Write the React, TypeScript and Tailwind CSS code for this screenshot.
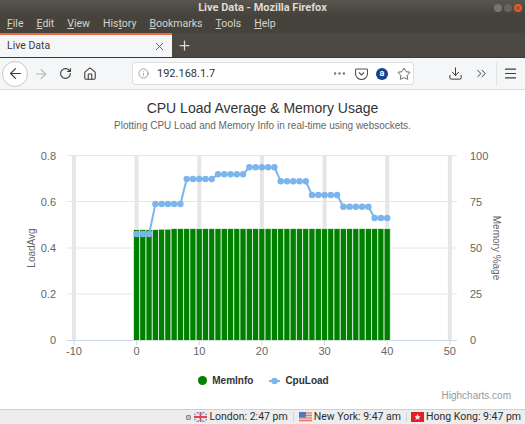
import { ArrowLeft, ArrowRight, RotateCw, House, Info, Ellipsis, Star, Download, ChevronsRight, Menu, X, Plus } from 'lucide-react';

const menus = [
  ['F', 'ile'],
  ['E', 'dit'],
  ['V', 'iew'],
  ['His', 't', 'ory'],
  ['B', 'ookmarks'],
  ['T', 'ools'],
  ['H', 'elp'],
];

const xAt = (v: number) => 136.6 + v * 6.265;
const yTicks = [
  { y: 155.5, left: '0.8', right: '100' },
  { y: 201.5, left: '0.6', right: '75' },
  { y: 248, left: '0.4', right: '50' },
  { y: 294, left: '0.2', right: '25' },
  { y: 340, left: '0', right: '0' },
];
const xTicks = [-10, 0, 10, 20, 30, 40, 50];

const cpuRuns = [
  { n: 3, y: 234 },
  { n: 5, y: 204 },
  { n: 5, y: 179 },
  { n: 5, y: 174.3 },
  { n: 5, y: 167.3 },
  { n: 5, y: 181.3 },
  { n: 5, y: 195 },
  { n: 5, y: 206.7 },
  { n: 3, y: 218 },
];
const cpu = cpuRuns.flatMap((r) => Array.from({ length: r.n }, () => r.y));

function TitleBar() {
  return (
    <div className="relative flex h-[15px] shrink-0 items-center justify-center bg-gradient-to-b from-[#57554e] to-[#45433c]">
      <span className="text-[11px] font-bold leading-none text-[#dfdbd2]">Live Data - Mozilla Firefox</span>
      <div className="absolute right-[3px] top-[4px] flex gap-[2px]">
        <span className="h-[8px] w-[8px] rounded-full bg-[#77756e]" />
        <span className="h-[8px] w-[8px] rounded-full bg-[#66645d]" />
        <span className="flex h-[8px] w-[8px] items-center justify-center rounded-full bg-[#e8592b]">
          <X size={6} strokeWidth={3} className="text-[#41403a]" />
        </span>
      </div>
    </div>
  );
}

function MenuBar() {
  return (
    <div className="flex h-[18px] shrink-0 items-center gap-[13px] bg-[#45433c] pl-[7px] text-[10.5px] leading-none text-[#d6d3ca]">
      {menus.map((m) => (
        <span key={m.join('')}>
          {m.length === 2 ? (
            <>
              <span className="underline">{m[0]}</span>
              {m[1]}
            </>
          ) : (
            <>
              {m[0]}
              <span className="underline">{m[1]}</span>
              {m[2]}
            </>
          )}
        </span>
      ))}
    </div>
  );
}

function TabBar() {
  return (
    <div className="flex h-[25px] shrink-0 items-stretch border-b border-[#3a3933] bg-[#4b4942]">
      <div className="flex w-[172px] items-center justify-between border-t-2 border-[#e9693f] bg-[#f5f6f7] pl-[7px] pr-[6px] text-[10.5px] text-[#3c3b37]">
        <span>Live Data</span>
        <X size={13} strokeWidth={1.5} className="text-[#444]" />
      </div>
      <div className="flex w-[24px] items-center justify-center">
        <Plus size={15} strokeWidth={2} className="text-[#dcdad4]" />
      </div>
    </div>
  );
}

function PocketIcon() {
  return (
    <svg width="13" height="12" viewBox="0 0 13 12" fill="none" stroke="#55554f" strokeWidth="1.1">
      <path d="M1.5 1h10a1 1 0 0 1 1 1v3.5a5.8 5.8 0 0 1-12 0V2a1 1 0 0 1 1-1z" />
      <path d="M4 4.5l2.5 2.4L9 4.5" strokeWidth="1.3" />
    </svg>
  );
}

function NavBar() {
  return (
    <div className="flex h-[32px] shrink-0 items-center border-b border-[#dcdcdc] bg-[#f5f6f7] text-[#3c3c3c]">
      <div className="ml-[2px] flex h-[26px] w-[26px] items-center justify-center rounded-full border border-[#c9c9c9] bg-white">
        <ArrowLeft size={17} strokeWidth={1.6} />
      </div>
      <ArrowRight size={16} strokeWidth={1.6} className="ml-[5px] text-[#b5b5b5]" />
      <RotateCw size={13} strokeWidth={2} className="ml-[10px]" />
      <House size={14} strokeWidth={1.8} className="ml-[11px]" />
      <div className="ml-[35px] flex h-[23px] w-[282px] items-center rounded-[3px] border border-[#dedede] bg-white pl-[5px] pr-[2px]">
        <Info size={11} strokeWidth={1.5} className="text-[#7a7a7a]" />
        <span className="ml-[8px] flex-1 text-[11px] leading-none text-[#333]">192.168.1.7</span>
        <Ellipsis size={15} className="text-[#777]" />
        <span className="ml-[8px] flex">
          <PocketIcon />
        </span>
        <span className="ml-[8px] flex h-[12px] w-[12px] items-center justify-center rounded-full bg-[#16418c] text-[9px] font-bold leading-none text-white">
          a
        </span>
        <Star size={14} strokeWidth={1.4} className="ml-[9px] text-[#444]" />
      </div>
      <Download size={15} strokeWidth={1.6} className="ml-[34px]" />
      <ChevronsRight size={15} strokeWidth={1.6} className="ml-[11px]" />
      <div className="ml-[7px] h-[24px] w-px bg-[#e2e2e2]" />
      <Menu size={15} strokeWidth={1.8} className="ml-[6px]" />
    </div>
  );
}

function Chart() {
  const font = '"Liberation Sans", Arial, sans-serif';
  return (
    <svg width="525" height="230" viewBox="0 135 525 230" fontFamily={font} className="block shrink-0">
      {yTicks.slice(0, 4).map((t) => (
        <line key={t.y} x1="67" x2="457" y1={t.y} y2={t.y} stroke="#e6e6e6" strokeWidth="1" />
      ))}
      {xTicks.map((v) => (
        <rect key={v} x={xAt(v) - 2} y="155" width="4" height="185" fill="#e6e6e6" />
      ))}
      <line x1="67" x2="457" y1="340.5" y2="340.5" stroke="#ccd6eb" strokeWidth="1" />
      {xTicks.map((v) => (
        <line key={v} x1={xAt(v)} x2={xAt(v)} y1="340" y2="345" stroke="#ccd6eb" strokeWidth="1" />
      ))}
      {Array.from({ length: 41 }, (_, i) => {
        const top = i < 4 ? 229.6 : i < 6 ? 229.2 : 228.6;
        return <rect key={i} x={xAt(i) - 3.1} y={top} width="6.2" height={340.5 - top} fill="#008000" stroke="#ffffff" strokeWidth="0.9" strokeOpacity="0.75" />;
      })}
      <polyline points={cpu.map((y, i) => `${xAt(i)},${y}`).join(' ')} fill="none" stroke="#7cb5ec" strokeWidth="2" />
      {cpu.map((y, i) => (
        <circle key={i} cx={xAt(i)} cy={y} r="3.2" fill="#7cb5ec" />
      ))}
      {yTicks.map((t) => (
        <text key={t.left} x="56" y={t.y + 4} textAnchor="end" fontSize="11" fill="#666666">
          {t.left}
        </text>
      ))}
      {yTicks.map((t) => (
        <text key={t.right} x="470" y={t.y + 4} fontSize="11" fill="#666666">
          {t.right}
        </text>
      ))}
      {xTicks.map((v) => (
        <text key={v} x={xAt(v)} y="355" textAnchor="middle" fontSize="11" fill="#666666">
          {v}
        </text>
      ))}
      <text transform="translate(35 248) rotate(-90)" textAnchor="middle" fontSize="10" fill="#666666">
        LoadAvg
      </text>
      <text transform="translate(493 248) rotate(90)" textAnchor="middle" fontSize="10" fill="#666666">
        Memory %age
      </text>
    </svg>
  );
}

function Legend() {
  return (
    <div className="mt-[10px] flex shrink-0 items-center justify-center gap-[16px] pl-[2px] text-[10px] font-bold leading-[11px] text-[#333333]">
      <span className="flex items-center gap-[5px]">
        <span className="h-[9px] w-[9px] rounded-full bg-[#008000]" />
        MemInfo
      </span>
      <span className="flex items-center gap-[5px]">
        <svg width="11" height="8" viewBox="0 0 11 8">
          <line x1="0" x2="11" y1="4" y2="4" stroke="#7cb5ec" strokeWidth="2" />
          <circle cx="5.5" cy="4" r="3.2" fill="#7cb5ec" />
        </svg>
        CpuLoad
      </span>
    </div>
  );
}

function UkFlag() {
  return (
    <svg width="13" height="10" viewBox="0 0 13 10">
      <rect width="13" height="10" fill="#8a97c4" />
      <path d="M0 0l13 10M13 0L0 10" stroke="#f0e4e4" strokeWidth="2" />
      <path d="M6.5 0v10M0 5h13" stroke="#f4f4f4" strokeWidth="3.4" />
      <path d="M6.5 0v10M0 5h13" stroke="#d9484f" strokeWidth="1.8" />
    </svg>
  );
}

function UsFlag() {
  return (
    <svg width="13" height="10" viewBox="0 0 13 10">
      <rect width="13" height="10" fill="#f2c5bd" />
      <path d="M0 1h13M0 3.5h13M0 6h13M0 8.5h13" stroke="#e2776b" strokeWidth="1" />
      <rect width="7" height="5.5" fill="#4d78c4" />
    </svg>
  );
}

function HkFlag() {
  return (
    <svg width="13" height="10" viewBox="0 0 13 10">
      <rect width="13" height="10" fill="#e32028" />
      <path d="M6.5 2l1 2 2 .2-1.5 1.500.5 2.300-2-1.200-2 1.200.5-2.300-1.500-1.500 2-.2z" fill="#fbe3e3" />
    </svg>
  );
}

function StatusBar() {
  return (
    <div className="flex h-[15px] shrink-0 items-center justify-end border-t border-[#d0d0d0] bg-[#ededed] pr-[4px] text-[10.5px] leading-none text-[#2e2e2e]">
      <span className="mr-[3px] h-[5px] w-[5px] rounded-[1px] border border-[#8c8c8c] bg-[#c4c4c4]" />
      <span className="flex items-center gap-[2px] border-r border-[#d4d4d4] pr-[5px]">
        <UkFlag />
        London: 2:47 pm
      </span>
      <span className="ml-[5px] flex items-center gap-[2px] border-r border-[#d4d4d4] pr-[5px]">
        <UsFlag />
        New York: 9:47 am
      </span>
      <span className="ml-[4px] flex items-center gap-[2px]">
        <HkFlag />
        Hong Kong: 9:47 pm
      </span>
    </div>
  );
}

export default function App() {
  return (
    <div className="flex h-[424px] w-[525px] flex-col overflow-hidden bg-white font-['Roboto',sans-serif]">
      <TitleBar />
      <MenuBar />
      <TabBar />
      <NavBar />
      <main className="flex min-h-0 flex-1 flex-col font-['Liberation_Sans',Arial,sans-serif]">
        <div className="h-[45px] shrink-0 pt-[9px] text-center">
          <h1 className="text-[14px] leading-[18px] text-[#333333]">CPU Load Average &amp; Memory Usage</h1>
          <p className="mt-[2px] text-[10px] leading-[14px] text-[#666666]">Plotting CPU Load and Memory Info in real-time using websockets.</p>
        </div>
        <Chart />
        <Legend />
        <p className="mt-auto pb-[8px] pr-[14px] text-right text-[10px] leading-none text-[#999999]">Highcharts.com</p>
      </main>
      <StatusBar />
    </div>
  );
}
